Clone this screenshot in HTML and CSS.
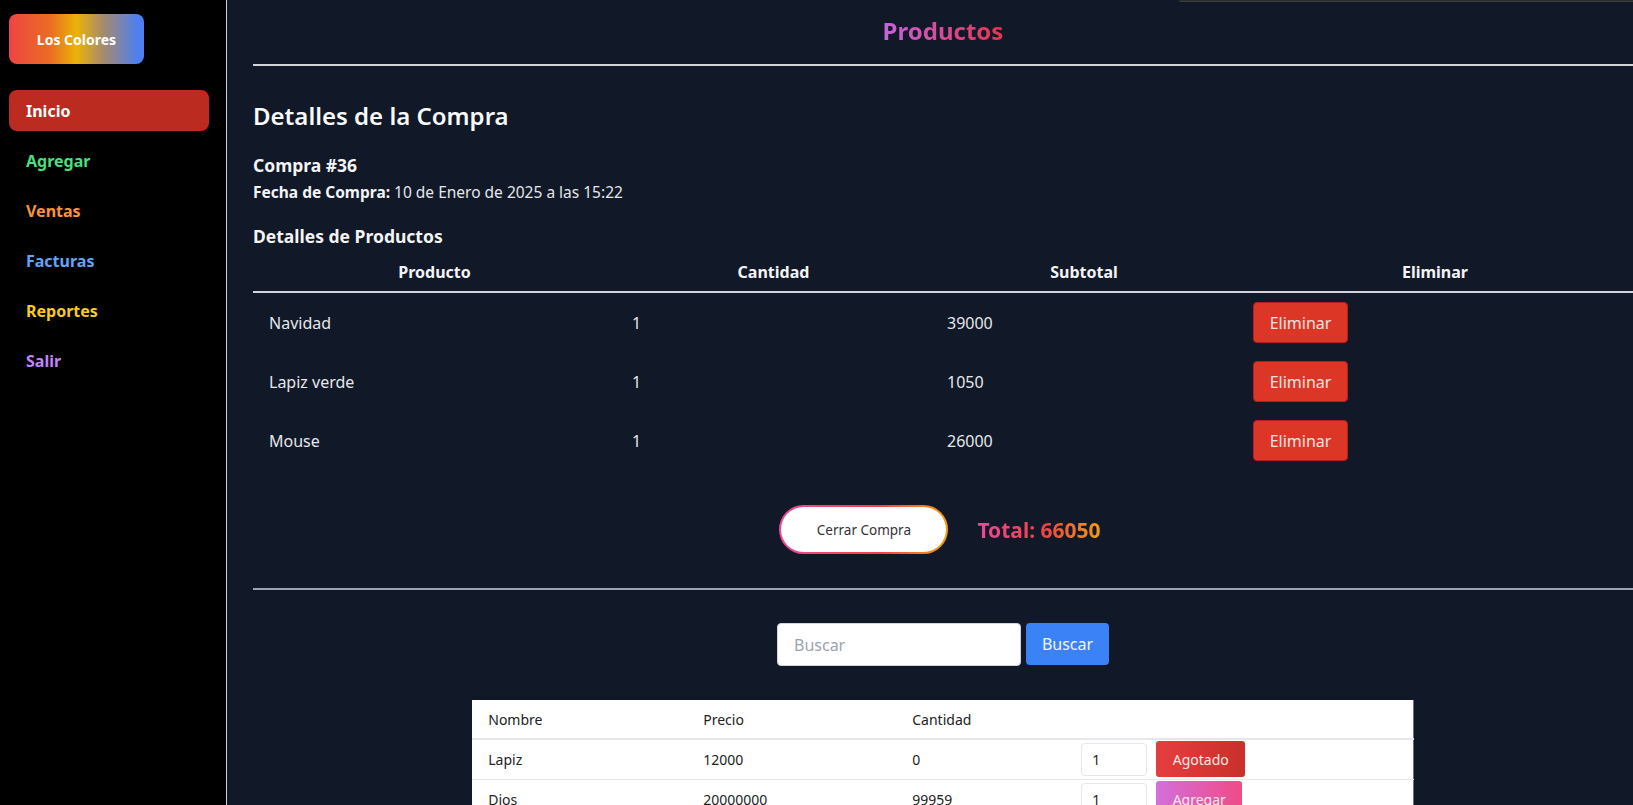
FILE: index.html
```html
<!DOCTYPE html>
<html lang="es">
<head>
<meta charset="utf-8">
<title>Productos</title>
<link rel="stylesheet" href="styles.css">
</head>
<body>
<div class="app">
  <aside class="sidebar">
    <div class="logo">Los Colores</div>
    <nav class="nav">
      <a class="nav-item active">Inicio</a>
      <a class="nav-item green">Agregar</a>
      <a class="nav-item orange">Ventas</a>
      <a class="nav-item blue">Facturas</a>
      <a class="nav-item yellow">Reportes</a>
      <a class="nav-item purple">Salir</a>
    </nav>
  </aside>
  <main class="main">
    <div class="top-strip"></div>
    <h1 class="page-title"><span class="grad-title">Productos</span></h1>
    <hr class="rule">
    <h2 class="section-title">Detalles de la Compra</h2>
    <h3 class="compra-id">Compra #36</h3>
    <p class="fecha"><strong>Fecha de Compra:</strong> 10 de Enero de 2025 a las 15:22</p>
    <h3 class="sub-title">Detalles de Productos</h3>
    <table class="detail-table">
      <colgroup>
        <col class="c1"><col class="c2"><col class="c3"><col class="c4">
      </colgroup>
      <thead>
        <tr><th>Producto</th><th>Cantidad</th><th>Subtotal</th><th>Eliminar</th></tr>
      </thead>
      <tbody>
        <tr><td>Navidad</td><td>1</td><td>39000</td><td><button class="btn-del">Eliminar</button></td></tr>
        <tr><td>Lapiz verde</td><td>1</td><td>1050</td><td><button class="btn-del">Eliminar</button></td></tr>
        <tr><td>Mouse</td><td>1</td><td>26000</td><td><button class="btn-del">Eliminar</button></td></tr>
      </tbody>
    </table>
    <div class="close-row">
      <button class="btn-close">Cerrar Compra</button>
      <span class="total">Total: 66050</span>
    </div>
    <hr class="rule2">
    <div class="search-row">
      <input class="search-input" type="text" placeholder="Buscar">
      <button class="btn-search">Buscar</button>
    </div>
    <table class="prod-table">
      <colgroup>
        <col class="p1"><col class="p2"><col class="p3"><col class="p4">
      </colgroup>
      <thead>
        <tr><th>Nombre</th><th>Precio</th><th>Cantidad</th><th></th></tr>
      </thead>
      <tbody>
        <tr>
          <td>Lapiz</td><td>12000</td><td>0</td>
          <td><div class="act"><input class="qty" type="text" value="1"><button class="btn-out">Agotado</button></div></td>
        </tr>
        <tr>
          <td>Dios</td><td>20000000</td><td>99959</td>
          <td><div class="act"><input class="qty" type="text" value="1"><button class="btn-add">Agregar</button></div></td>
        </tr>
      </tbody>
    </table>
  </main>
</div>
</body>
</html>
```

FILE: styles.css
```css
* { box-sizing: border-box; }
html, body { margin: 0; padding: 0; height: 100%; overflow: hidden; }
body {
  font-family: "Noto Sans", "Open Sans", sans-serif;
  background: #111827;
  color: #f3f4f6;
}
.app { display: flex; height: 100vh; }

.sidebar {
  width: 227px;
  flex: none;
  background: #000;
  border-right: 1px solid #d4d4d8;
  padding: 14px 17px 0 9px;
}
.logo {
  width: 135px;
  height: 50px;
  border-radius: 8px;
  background: linear-gradient(90deg, #ef4444 0%, #ea6c22 30%, #eab308 50%, #a58a6e 70%, #4f7ff0 95%);
  color: #fff;
  font-weight: 700;
  font-size: 14px;
  display: flex;
  align-items: center;
  justify-content: center;
}
.nav { display: flex; flex-direction: column; gap: 9px; margin-top: 26px; }
.nav-item {
  height: 41px;
  display: flex;
  align-items: center;
  padding-left: 17px;
  border-radius: 8px;
  font-weight: 700;
  font-size: 16px;
}
.nav-item.active { background: #bb2b20; color: #fff; }
.green { color: #4ade80; }
.orange { color: #fb923c; }
.blue { color: #60a5fa; }
.yellow { color: #facc15; }
.purple { color: #c084fc; }

.main {
  flex: 1;
  min-width: 0;
  padding-left: 26px;
  overflow: hidden;
  position: relative;
}
.top-strip {
  position: absolute;
  top: 0;
  right: 0;
  width: 454px;
  height: 2px;
  background: #2a2c30;
  border-bottom: 1px solid #3a3d42;
  border-bottom-left-radius: 2px;
}
.page-title {
  margin: 15px 0 17px;
  text-align: center;
  font-size: 24px;
  line-height: 32px;
  font-weight: 700;
}
.grad-title {
  background: linear-gradient(90deg, #c464dc, #e7344f);
  -webkit-background-clip: text;
  background-clip: text;
  color: transparent;
}
.rule { margin: 0; border: 0; border-top: 2px solid #d1d5db; }
.section-title {
  margin: 34px 0 0;
  font-size: 24px;
  line-height: 32px;
  font-weight: 600;
  color: #f9fafb;
}
.compra-id {
  margin: 21px 0 0;
  font-size: 17.5px;
  line-height: 24px;
  font-weight: 700;
}
.fecha {
  margin: 3px 0 0;
  font-size: 15.5px;
  line-height: 24px;
  color: #e5e7eb;
}
.fecha strong { color: #f3f4f6; }
.sub-title {
  margin: 20px 0 0;
  font-size: 17.5px;
  line-height: 24px;
  font-weight: 700;
}

.detail-table {
  width: 100%;
  border-collapse: collapse;
  table-layout: fixed;
}
.c1 { width: 363px; }
.c2 { width: 315px; }
.c3 { width: 306px; }
.c4 { width: 396px; }
.detail-table th {
  font-size: 16px;
  font-weight: 700;
  line-height: 24px;
  padding: 12px 16px 7px;
  text-align: center;
  border-bottom: 2px solid #d1d5db;
  color: #f3f4f6;
}
.detail-table td {
  padding: 9px 16px;
  font-size: 16px;
  color: #e5e7eb;
  vertical-align: middle;
}
.btn-del {
  height: 41px;
  width: 95px;
  border: 1px solid #b91c1c;
  border-radius: 4px;
  background: #dc3626;
  color: #fde2e2;
  font-family: inherit;
  font-size: 16px;
  display: block;
}

.close-row {
  display: flex;
  justify-content: center;
  align-items: center;
  gap: 29px;
  margin-top: 35px;
  padding-right: 6px;
}
.btn-close {
  width: 169px;
  height: 49px;
  border-radius: 25px;
  border: 2px solid transparent;
  background: linear-gradient(#fff, #fff) padding-box,
              linear-gradient(90deg, #ec4899, #ef4444 60%, #f59e0b) border-box;
  color: #333;
  font-family: inherit;
  font-size: 13.5px;
}
.total {
  font-size: 21px;
  font-weight: 700;
  background: linear-gradient(90deg, #ec4899 0%, #ef4444 55%, #f59e0b 100%);
  -webkit-background-clip: text;
  background-clip: text;
  color: transparent;
}
.rule2 { margin: 34px 0 0; border: 0; border-top: 2px solid #9ca3af; }

.search-row {
  display: flex;
  justify-content: center;
  gap: 5px;
  margin-top: 33px;
}
.search-input {
  width: 244px;
  height: 43px;
  border: 1px solid #d1d5db;
  border-radius: 4px;
  padding: 0 16px;
  font-family: inherit;
  font-size: 16px;
  color: #111;
}
.search-input::placeholder { color: #9ca3af; }
.btn-search {
  width: 83px;
  height: 42px;
  border: 0;
  border-radius: 4px;
  background: #3b82f6;
  color: #f1f5ff;
  font-family: inherit;
  font-size: 16px;
}

.prod-table {
  margin: 34px auto 0;
  width: 941px;
  background: #fff;
  border-collapse: collapse;
  table-layout: fixed;
  border-right: 1px solid #6b7280;
}
.p1 { width: 215px; }
.p2 { width: 209px; }
.p3 { width: 169px; }
.p4 { width: 348px; }
.prod-table th, .prod-table td {
  text-align: left;
  font-weight: 400;
  font-size: 14px;
  color: #222;
  padding: 0 16px;
}
.prod-table th { height: 39px; border-bottom: 2px solid #e5e7eb; }
.prod-table td { height: 40px; border-bottom: 1px solid #e5e7eb; }
.act { display: flex; align-items: center; gap: 9px; }
.qty {
  width: 66px;
  height: 33px;
  border: 1px solid #e5e7eb;
  border-radius: 4px;
  padding: 0 10px;
  font-family: inherit;
  font-size: 14px;
  color: #222;
}
.btn-out, .btn-add {
  width: 89px;
  height: 36px;
  border: 0;
  border-radius: 3px;
  font-family: inherit;
  font-size: 14px;
  color: #fde8e8;
}
.btn-out { background: linear-gradient(90deg, #e53e3e, #c9302a); }
.btn-add { width: 86px; background: linear-gradient(90deg, #d36fdc, #ef4b86); }
```
